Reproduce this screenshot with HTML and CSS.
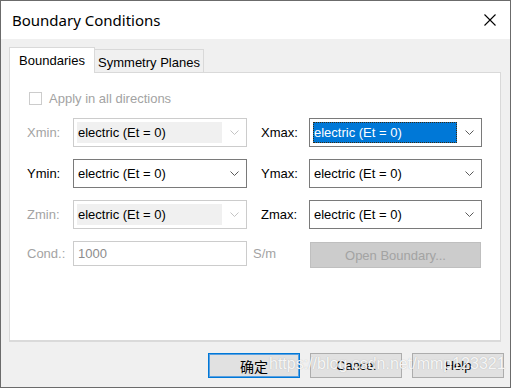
FILE: index.html
```html
<!DOCTYPE html>
<html lang="en">
<head>
  <meta charset="UTF-8">
  <title>Boundary Conditions</title>
  <link rel="stylesheet" href="styles.css">
</head>
<body>

  <div class="window">
    <div class="titlebar">
      <span class="title">Boundary Conditions</span>
      <svg class="close" width="12" height="12" viewBox="0 0 12 12">
        <path d="M0.5 0.5 L11.5 11.5 M11.5 0.5 L0.5 11.5" stroke="#000" stroke-width="1.1" fill="none"/>
      </svg>
    </div>

    <div class="dialog-body">
      <div class="tabs">
        <div class="tab active">Boundaries</div>
        <div class="tab">Symmetry Planes</div>
      </div>

      <div class="panel">
        <div class="check-row">
          <span class="checkbox"></span>
          <span class="disabled-text">Apply in all directions</span>
        </div>

        <div class="fields">
          <label class="field-label disabled-text">Xmin:</label>
          <div class="combo disabled">
            <span class="combo-value">electric (Et = 0)</span>
            <svg class="arrow" width="9" height="5" viewBox="0 0 9 5"><path d="M0.5 0.5 L4.5 4.5 L8.5 0.5" fill="none" stroke="#c4c4c4"/></svg>
          </div>
          <label class="field-label right">Xmax:</label>
          <div class="combo">
            <span class="combo-value selected">electric (Et = 0)</span>
            <svg class="arrow" width="9" height="5" viewBox="0 0 9 5"><path d="M0.5 0.5 L4.5 4.5 L8.5 0.5" fill="none" stroke="#5a5a5a"/></svg>
          </div>

          <label class="field-label">Ymin:</label>
          <div class="combo">
            <span class="combo-value">electric (Et = 0)</span>
            <svg class="arrow" width="9" height="5" viewBox="0 0 9 5"><path d="M0.5 0.5 L4.5 4.5 L8.5 0.5" fill="none" stroke="#5a5a5a"/></svg>
          </div>
          <label class="field-label right">Ymax:</label>
          <div class="combo">
            <span class="combo-value">electric (Et = 0)</span>
            <svg class="arrow" width="9" height="5" viewBox="0 0 9 5"><path d="M0.5 0.5 L4.5 4.5 L8.5 0.5" fill="none" stroke="#5a5a5a"/></svg>
          </div>

          <label class="field-label disabled-text">Zmin:</label>
          <div class="combo disabled">
            <span class="combo-value">electric (Et = 0)</span>
            <svg class="arrow" width="9" height="5" viewBox="0 0 9 5"><path d="M0.5 0.5 L4.5 4.5 L8.5 0.5" fill="none" stroke="#c4c4c4"/></svg>
          </div>
          <label class="field-label right">Zmax:</label>
          <div class="combo">
            <span class="combo-value">electric (Et = 0)</span>
            <svg class="arrow" width="9" height="5" viewBox="0 0 9 5"><path d="M0.5 0.5 L4.5 4.5 L8.5 0.5" fill="none" stroke="#5a5a5a"/></svg>
          </div>

          <label class="field-label disabled-text">Cond.:</label>
          <div class="text-input">1000</div>
          <label class="field-label unit disabled-text">S/m</label>
          <button class="open-button">Open Boundary...</button>
        </div>
      </div>

      <div class="actions">
        <button class="btn default">确定</button>
        <button class="btn">Cancel</button>
        <button class="btn">Help</button>
      </div>
    </div>

    <div class="watermark">https://blog.csdn.net/mmp123321</div>
  </div>

</body>
</html>
```

FILE: styles.css
```css
body {
  margin: 0;
  background-color: #ffffff;
  font-family: 'Liberation Sans', Arial, sans-serif;
  font-size: 13px;
  color: #000000;
}

.window {
  position: relative;
  width: 511px;
  height: 388px;
  box-sizing: border-box;
  border: 1px solid #6b6b6b;
  background-color: #f0f0f0;
  display: flex;
  flex-direction: column;
}

.titlebar {
  height: 38px;
  background-color: #ffffff;
  display: flex;
  justify-content: space-between;
  align-items: center;
  padding: 0 14px 0 11px;
}

.title {
  font-family: 'Noto Sans', sans-serif;
  font-size: 15px;
  color: #000000;
  margin-top: -1px;
}

.close {
  display: block;
  margin-top: -1px;
}

.dialog-body {
  padding: 8px 8px 0 8px;
}

/* tabs */
.tabs {
  display: flex;
  align-items: flex-start;
  height: 26px;
}

.tab {
  box-sizing: border-box;
  height: 23px;
  margin-top: 2px;
  padding: 5px 0 0 0;
  width: 109px;
  text-align: center;
  border: 1px solid #d9d9d9;
  border-left: none;
  border-bottom: none;
  background-color: #f0f0f0;
}

.tab.active {
  position: relative;
  z-index: 1;
  margin-top: 0;
  height: 26px;
  width: 86px;
  padding-top: 5px;
  border-left: 1px solid #d9d9d9;
  background-color: #ffffff;
}

.panel {
  margin-top: -1px;
  height: 270px;
  box-sizing: border-box;
  border: 1px solid #d9d9d9;
  border-bottom: 2px solid #dadada;
  background-color: #ffffff;
  padding: 18px 0 0 17px;
  margin-right: 1px;
}

.disabled-text {
  color: #a3a3a3;
}

.check-row {
  display: flex;
  align-items: center;
  height: 14px;
  gap: 7px;
  margin-left: 2px;
  margin-bottom: 13px;
}

.checkbox {
  width: 13px;
  height: 13px;
  box-sizing: border-box;
  border: 1px solid #cccccc;
  background-color: #ffffff;
}

/* field grid */
.fields {
  display: grid;
  grid-template-columns: 46px 174px 62px 173px;
  grid-template-rows: 29px 29px 29px 25px;
  row-gap: 12px;
}

.field-label {
  display: flex;
  align-items: center;
}

.field-label.right {
  padding-left: 14px;
}

.field-label.unit {
  padding-left: 6px;
}

.combo {
  box-sizing: border-box;
  border: 1px solid #7a7a7a;
  background-color: #ffffff;
  display: flex;
  align-items: center;
  padding: 3px 7px 3px 3px;
}

.combo.disabled {
  border-color: #cccccc;
}

.combo-value {
  height: 21px;
  width: 145px;
  box-sizing: border-box;
  padding-left: 1px;
  display: flex;
  align-items: center;
}

.combo.disabled .combo-value {
  background-color: #f0f0f0;
}

.combo-value.selected {
  background-color: #0078d7;
  color: #ffffff;
  border: 1px dotted #3a2a10;
  padding-left: 0;
  width: 144px;
}

.arrow {
  margin-left: auto;
  display: block;
}

.text-input {
  box-sizing: border-box;
  border: 1px solid #cccccc;
  background-color: #ffffff;
  color: #8c8c8c;
  display: flex;
  align-items: center;
  padding-left: 4px;
}

.open-button {
  margin: 1px 1px 0 1px;
  height: 26px;
  border: 1px solid #bfbfbf;
  background-color: #cccccc;
  color: #a3a3a3;
  font-family: 'Liberation Sans', Arial, sans-serif;
  font-size: 13px;
  padding: 0;
}

/* bottom buttons */
.actions {
  display: flex;
  justify-content: flex-end;
  gap: 10px;
  margin-top: 11px;
  margin-right: -2px;
}

.btn {
  width: 92px;
  height: 25px;
  box-sizing: border-box;
  border: 1px solid #adadad;
  background-color: #e1e1e1;
  font-family: 'Liberation Sans', 'Noto Sans CJK SC', sans-serif;
  font-size: 13px;
  color: #000000;
  padding: 0;
}

.btn.default {
  border: 1px solid #0078d7;
  box-shadow: inset 0 0 0 1px #5aa0e0;
  font-size: 14px;
}

.watermark {
  position: absolute;
  left: 268px;
  top: 354px;
  font-family: 'Liberation Sans', Arial, sans-serif;
  font-size: 16px;
  color: rgba(255, 255, 255, 0.9);
  text-shadow: 0 0 1px rgba(120, 120, 120, 0.5);
  white-space: nowrap;
}
```
